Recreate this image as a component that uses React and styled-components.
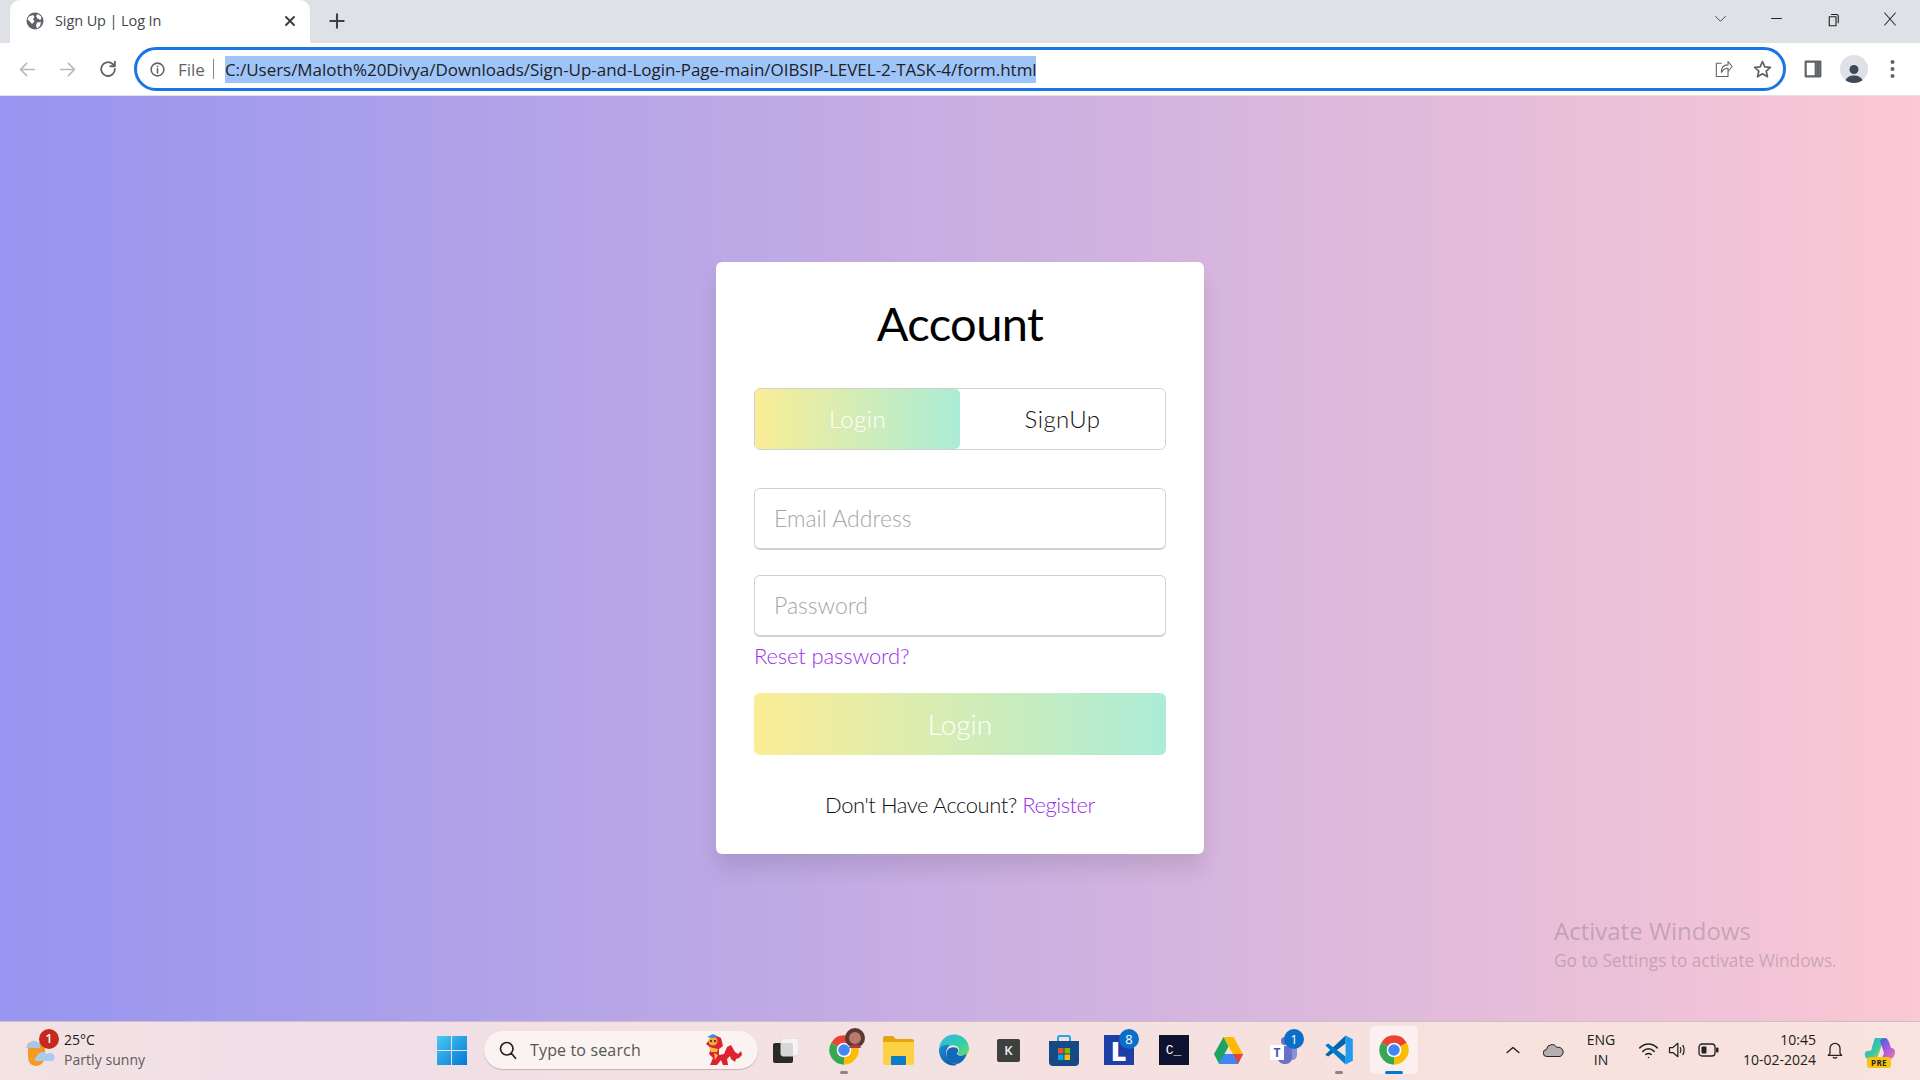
import React from "react";
import styled, { createGlobalStyle } from "styled-components";

const Global = createGlobalStyle`
  html, body { margin: 0; padding: 0; width: 100%; height: 100%; overflow: hidden; }
  body { font-family: "Open Sans", "Noto Sans", sans-serif; }
  * { box-sizing: border-box; }
`;

const Screen = styled.div`display:flex;flex-direction:column;width:1920px;height:1080px;position:relative;overflow:hidden;`;

/* ---------- browser chrome ---------- */
const TabStrip = styled.div`display:flex;align-items:flex-end;height:43px;background:#dee1e6;flex:none;`;
const Tab = styled.div`
  display:flex;align-items:center;width:300px;height:43px;margin-left:10px;padding:0 12px 2px 16px;
  background:#fff;border-radius:10px 10px 0 0;color:#45474b;font-size:14.5px;
`;
const TabTitle = styled.span`margin-left:11px;flex:1;letter-spacing:-.1px;`;
const NewTab = styled.div`display:flex;align-items:center;justify-content:center;width:32px;height:43px;margin-left:11px;padding-bottom:2px;`;
const WindowControls = styled.div`display:flex;margin-left:auto;height:43px;align-self:flex-start;padding-right:2px;`;
const WinButton = styled.div`display:flex;align-items:center;justify-content:center;width:56.5px;height:37px;`;

const Toolbar = styled.div`display:flex;align-items:center;height:53px;padding-left:7px;background:#fff;flex:none;border-bottom:1px solid #e3e0e8;`;
const NavButton = styled.div`display:flex;align-items:center;justify-content:center;width:40.3px;height:40px;`;
const Omnibox = styled.div`
  display:flex;align-items:center;width:1652px;height:44px;margin-left:6px;padding-left:12px;
  border:3px solid #1a73e8;border-radius:22px;font-size:17px;color:#5f6368;
`;
const FileLabel = styled.span`margin-left:12px;width:35px;`;
const Divider = styled.span`width:1px;height:20px;background:#80868b;`;
const Url = styled.span`
  margin-left:11px;height:27px;line-height:27px;width:811px;white-space:nowrap;overflow:hidden;
  background:#9fc5f8;color:#202124;letter-spacing:-.03px;
`;
const OmniActions = styled.div`display:flex;align-items:center;margin-left:auto;padding-right:0;`;
const OmniAction = styled.div`display:flex;align-items:center;justify-content:center;width:40px;height:36px;`;
const ToolRight = styled.div`display:flex;align-items:center;margin-left:6px;`;
const ToolAction = styled.div`display:flex;align-items:center;justify-content:center;width:${p => p.$w}px;height:40px;`;
const Avatar = styled.div`display:flex;align-items:flex-end;justify-content:center;width:28px;height:28px;border-radius:50%;background:#dee1e6;overflow:hidden;`;

/* ---------- page ---------- */
const Main = styled.main`
  flex:1;display:flex;align-items:center;justify-content:center;padding-bottom:2px;
  background:linear-gradient(to right,#9795f0,#fbc8d4);
  font-family:"Lato","Open Sans",sans-serif;font-weight:300;
`;
const Card = styled.section`
  width:488px;padding:38px 38px 37px;background:#fff;border-radius:6px;
  box-shadow:0 15px 20px rgba(0,0,0,.1);display:flex;flex-direction:column;
`;
const Title = styled.h1`
  margin:0 0 38px;height:50px;line-height:47px;text-align:center;font-size:47px;font-weight:400;color:#000;letter-spacing:-.6px;
`;
const Tabs = styled.div`display:flex;height:62px;margin-bottom:38px;border:1px solid #d0d0d0;border-radius:6px;overflow:hidden;`;
const TabButton = styled.button`
  flex:1;border:0;font:inherit;font-size:24px;letter-spacing:.4px;padding:0;border-radius:5px;
  color:${p => (p.$active ? "#fff" : "#111")};
  background:${p => (p.$active ? "linear-gradient(to right,#fbed96,#abecd6)" : "#fff")};
`;
const Field = styled.input`
  display:block;width:100%;height:62px;margin-bottom:${p => p.$mb}px;padding:0 19px;
  border:1px solid #d0d0d0;border-bottom-width:2px;border-radius:6px;outline:none;background:#fff;
  font:inherit;font-size:23px;letter-spacing:0;
  &::placeholder{color:#a5a5a5;opacity:1;}
`;
const Reset = styled.a`display:block;height:24px;line-height:24px;margin:7px 0 25px;font-size:22px;color:#9b30e8;letter-spacing:-.15px;`;
const Submit = styled.button`
  height:62px;border:0;border-radius:6px;padding:0;font:inherit;font-size:28px;color:#fff;
  background:linear-gradient(to right,#fbed96,#abecd6);
`;
const Foot = styled.p`margin:38px 0 0;height:24px;line-height:24px;text-align:center;font-size:22px;color:#111;letter-spacing:-.47px;`;
const FootLink = styled.a`color:#9b30e8;`;

const Watermark = styled.div`position:absolute;left:1554px;top:914px;color:rgba(90,90,90,.3);`;
const WatermarkHead = styled.div`font-size:24px;line-height:34px;`;
const WatermarkSub = styled.div`font-size:17.25px;line-height:24px;margin-top:1px;`;

/* ---------- taskbar ---------- */
const Taskbar = styled.footer`
  display:grid;grid-template-columns:424px 995px 1fr;height:59px;flex:none;color:#1c1c1c;padding-bottom:2px;
  border-top:1px solid #cdbfc6;
  background:linear-gradient(to right,#f3e3e2,#f0dee8 15%,#f3e1e3 40%,#f6e1de 70%,#f9e3de);
`;
const Weather = styled.div`display:flex;align-items:center;padding-left:25px;`;
const WeatherIcon = styled.div`position:relative;width:30px;height:30px;margin-right:9px;`;
const RedBadge = styled.span`
  position:absolute;left:14px;top:-6px;width:20px;height:20px;border-radius:50%;background:#c42b1c;color:#fff;
  font-size:12px;line-height:20px;text-align:center;font-weight:600;
`;
const WeatherText = styled.div`font-size:14px;line-height:20px;`;
const WeatherSub = styled.div`color:#5d5a5c;letter-spacing:.05px;`;
const Center = styled.div`display:flex;align-items:center;`;
const TaskItem = styled.div`
  position:relative;display:flex;align-items:center;justify-content:center;flex:none;width:${p => p.$w || 55}px;height:48px;
  margin:0 ${p => p.$mr || 0}px 0 ${p => p.$ml || 0}px;border-radius:5px;
  background:${p => (p.$active ? "rgba(255,255,255,.5)" : "transparent")};
`;
const Search = styled.div`
  position:relative;display:flex;align-items:center;flex:none;width:274px;height:38px;margin-left:5px;padding-left:14px;
  border-radius:19px;background:#faf3f1;box-shadow:0 1px 1px rgba(120,90,90,.35);font-size:16px;color:#555;
`;
const SearchText = styled.span`margin-left:12px;letter-spacing:.15px;`;
const Dragon = styled.div`position:absolute;right:13px;top:3px;`;
const Running = styled.span`
  position:absolute;left:50%;bottom:0;transform:translateX(-50%);height:3px;border-radius:2px;
  width:${p => (p.$active ? 18 : 8)}px;background:${p => (p.$active ? "#0078d4" : "#8a8385")};
`;
const Pip = styled.span`
  position:absolute;right:${p => p.$r}px;top:${p => p.$t}px;width:20px;height:20px;border-radius:50%;background:#0b6fc9;color:#fff;
  font-size:13px;line-height:20px;text-align:center;
`;
const Tile = styled.div`
  display:flex;align-items:center;justify-content:center;width:${p => p.$s}px;height:${p => p.$s}px;
  background:${p => p.$bg};color:${p => p.$fg};border-radius:${p => p.$r || 0}px;
  font-size:${p => p.$fs}px;font-weight:${p => p.$fw || 400};font-family:${p => p.$ff || "inherit"};
`;
const Tray = styled.div`display:flex;align-items:center;justify-content:flex-end;padding-right:18px;`;
const TrayItem = styled.div`display:flex;align-items:center;justify-content:center;width:${p => p.$w}px;height:48px;`;
const Stack = styled.div`font-size:14px;line-height:20px;text-align:${p => p.$align};width:100%;color:#222;`;
const Pre = styled.span`
  position:absolute;left:3px;bottom:-5px;width:24px;height:11px;border-radius:3px;background:#f6c50e;color:#222;
  font-size:8px;line-height:11px;font-weight:700;text-align:center;letter-spacing:.4px;
`;
const Copilot = styled.div`position:relative;width:28px;height:26px;`;

/* ---------- icons ---------- */
const Globe = () => (
  <svg width="18" height="18" viewBox="0 0 18 18"><circle cx="9" cy="9" r="8.500" fill="#5f6368"/>
    <path d="M3 4.500 7 3l1.500 2L7 7l1.500 2.500L6 12 3.500 9 1.500 7.500zM12 2l3.500 3-1 3-3-1.500L10 4zM11 10.500l4-.5-1 4-3 2.500-1-3z" fill="#fff"/></svg>
);
const Line = ({ d, s = 20, w = 2, c = "#5f6368", v = 24 }) => (
  <svg width={s} height={s} viewBox={`0 0 ${v} ${v}`} fill="none" stroke={c} strokeWidth={w} strokeLinecap="round" strokeLinejoin="round"><path d={d}/></svg>
);
const ChromeLogo = () => (
  <svg width="32" height="32" viewBox="0 0 24 24">
    <path d="M12 12 2.470 6.500A11 11 0 0 1 21.530 6.500z" fill="#ea4335"/>
    <path d="M12 12l9.530-5.500A11 11 0 0 1 12 23z" fill="#fbbc04"/>
    <path d="M12 12v11A11 11 0 0 1 2.470 6.500z" fill="#34a853"/>
    <circle cx="12" cy="12" r="5.500" fill="#fff"/><circle cx="12" cy="12" r="4.300" fill="#4285f4"/>
  </svg>
);
const FilesIcon = () => (
  <svg width="31" height="30" viewBox="0 0 31 30">
    <path d="M0 3a2 2 0 0 1 2-2h8l3 3h16a2 2 0 0 1 2 2v4H0z" fill="#e5a50f"/>
    <path d="M0 7h31v21a2 2 0 0 1-2 2H2a2 2 0 0 1-2-2z" fill="#fcd145"/>
    <rect x="8" y="21" width="15" height="9" rx="1" fill="#0a7cc4"/>
  </svg>
);
const EdgeIcon = () => (
  <svg width="32" height="32" viewBox="0 0 32 32">
    <defs>
      <linearGradient id="e1" x1="0" y1="0" x2="1" y2="1"><stop offset="0" stopColor="#2fb6ea"/><stop offset=".6" stopColor="#31cfa6"/><stop offset="1" stopColor="#6fdc5e"/></linearGradient>
      <linearGradient id="e2" x1="0" y1="0" x2="1" y2="1"><stop offset="0" stopColor="#1a8fd6"/><stop offset="1" stopColor="#0c4f9e"/></linearGradient>
    </defs>
    <path d="M1 15C2 6 8 .5 16 .5 25 .5 31 7 31 15c0 4-3 6.500-7 6.500-3 0-5-1-5-2.500 2-1 2.500-3 1.500-5-1.500-3-6-3.500-9.500-2C7 13.500 3 13 1 15z" fill="url(#e1)"/>
    <path d="M1 15c2-3 7-5.500 11-3.500-3 2-4.500 6-3.500 10S14 30 19 30.500C18 31 17 31.500 16 31.500 7 31.500.5 24 1 15z" fill="url(#e2)"/>
    <path d="M12 14c3-1.500 7-1 8 1.500.5 1.500 0 3-1.500 3.500.5 2 3 3 5.500 2.500 2-.2 4-1 5-2.500-1.500 6-6 11-11 11-5-.5-9-4-9.500-9-.3-3 1-6 3.500-7z" fill="#1268b8"/>
  </svg>
);
const StoreIcon = () => (
  <svg width="30" height="31" viewBox="0 0 30 31">
    <path d="M9 6V3a2 2 0 0 1 2-2h8a2 2 0 0 1 2 2v3" fill="none" stroke="#27a4e6" strokeWidth="2"/>
    <path d="M0 6h30v21a4 4 0 0 1-4 4H4a4 4 0 0 1-4-4z" fill="#164a86"/>
    <rect x="9" y="13" width="5.500" height="5.500" fill="#f25022"/><rect x="15.500" y="13" width="5.500" height="5.500" fill="#7fba00"/>
    <rect x="9" y="19.500" width="5.500" height="5.500" fill="#00a4ef"/><rect x="15.500" y="19.500" width="5.500" height="5.500" fill="#ffb900"/>
  </svg>
);
const DriveIcon = () => (
  <svg width="29" height="27" viewBox="0 0 29 27">
    <path d="M9.500 0h10l9.500 17h-10z" fill="#ffba00"/>
    <path d="M9.500 17H29l-5 10H5z" fill="#4285f4"/>
    <path d="M9.500 0 0 17l5 10 9.500-17.500z" fill="#1ea362"/>
    <path d="M29 17l-5 10-5-10z" fill="#e0483b"/>
  </svg>
);
const TeamsIcon = () => (
  <svg width="28" height="28" viewBox="0 0 28 28">
    <circle cx="15" cy="5" r="4" fill="#6a6fc8"/><circle cx="23" cy="7" r="3" fill="#8a90dc"/>
    <path d="M17 10h10v9a5 5 0 0 1-6 5z" fill="#8a90dc"/>
    <path d="M7 10h15v12a6 6 0 0 1-6 6 8 8 0 0 1-9-7z" fill="#6a6fc8"/>
    <rect x="0" y="9" width="14" height="15" fill="#fff"/>
    <text x="7" y="21" fontSize="12" fontWeight="700" fill="#4b53bc" textAnchor="middle" fontFamily="Open Sans">T</text>
  </svg>
);
const VsCode = () => (
  <svg width="30" height="30" viewBox="0 0 100 100">
    <path d="M4 66 14 72 72 28V2z" fill="#0065a9"/>
    <path d="M4 34 14 28 72 72V98z" fill="#007acc"/>
    <path d="M72 2 96 14V86L72 98z" fill="#1f9cf0"/>
  </svg>
);
const Copi = () => (
  <svg width="32" height="28" viewBox="0 0 32 28">
    <defs>
      <linearGradient id="c1" x1="0" y1="0" x2="1" y2="1"><stop offset="0" stopColor="#22a7ee"/><stop offset=".55" stopColor="#3cc8a0"/><stop offset="1" stopColor="#d9d84a"/></linearGradient>
      <linearGradient id="c2" x1="0" y1="0" x2="1" y2="1"><stop offset="0" stopColor="#2468e0"/><stop offset=".5" stopColor="#a65ae0"/><stop offset="1" stopColor="#ee7ab0"/></linearGradient>
    </defs>
    <path d="M11 1h9l-5 15c-1 4-3 7-7 7-5 0-8-3-7-7 1-2 2-2 3-2 3 0 4-1 4-4z" fill="url(#c1)"/>
    <path d="M16 4c1-2 3-3 5-3s3 2 4 4l2 6c2 0 4 1 4 4 0 5-4 8-8 8h-9c4-1 5-4 6-7z" fill="url(#c2)"/>
  </svg>
);
const Win11 = () => (
  <svg width="30" height="30" viewBox="0 0 30 30">
    <defs><linearGradient id="w" x1="0" y1="0" x2="1" y2="1"><stop offset="0" stopColor="#4cc8f5"/><stop offset="1" stopColor="#0078d4"/></linearGradient></defs>
    <path d="M0 1h14v14H0zM15 1h15v14H15zM0 16h14v14H0zM15 16h15v14H15z" fill="url(#w)"/>
  </svg>
);
const DragonIcon = () => (
  <svg width="44" height="32" viewBox="0 0 44 32">
    <path d="M10 4l4-3 6 3 2 8-4 3v6l5-1 3-7 4-2 4 7 3 2 3-3 1 4-3 3-3 1-1 3-4-3-1-3-3 3 1 6h-5l-2-5-4 5H9l3-7-4-4 2-6-5-4z" fill="#dd2230"/>
    <circle cx="12" cy="7" r="4.500" fill="#f2a83a"/><path d="M6 3l6-3 5 3-6 1z" fill="#3b8fd6"/>
    <path d="M8 13l9 2-1 3H10zM13 19l4 2-3 5z" fill="#f8c23c"/>
    <circle cx="10" cy="7" r="1" fill="#222"/><circle cx="14" cy="7" r="1" fill="#222"/>
  </svg>
);
const WeatherArt = () => (
  <svg width="30" height="32" viewBox="0 0 30 32">
    <path d="M3 8h17v14a9 9 0 0 1-9 9c-5 0-8-4-8-9z" fill="#f39c1f"/>
    <path d="M1 13a5 5 0 0 1 3-4 6 6 0 0 1 10-1 5 5 0 0 1 1 5z" fill="#a9c6ea"/>
    <path d="M10 26a4 4 0 0 1 2-5 6 6 0 0 1 10-2 4 4 0 0 1 6 7z" fill="#a9cbef"/>
  </svg>
);
const Battery = () => (
  <svg width="21" height="14" viewBox="0 0 21 14">
    <rect x="1" y="1" width="16" height="12" rx="3" fill="none" stroke="#222" strokeWidth="1.300"/>
    <rect x="3.500" y="3.500" width="5" height="7" rx="1" fill="#222"/><rect x="18" y="4.500" width="2.500" height="5" rx="1" fill="#222"/>
  </svg>
);
const Cloud = () => (
  <svg width="21" height="14" viewBox="0 0 21 14">
    <path d="M4 13.500a3.500 3.500 0 0 1-.5-7A5.500 5.500 0 0 1 13.800 4.500 4.500 4.500 0 0 1 17 13.500z" fill="#b4aeae" stroke="#222" strokeWidth="1"/>
  </svg>
);

const App = () => (
  <Screen>
    <Global />
    <TabStrip>
      <Tab>
        <Globe />
        <TabTitle>Sign Up | Log In</TabTitle>
        <Line d="M6 6l12 12M18 6 6 18" s={16} w={3} c="#3c4043" />
      </Tab>
      <NewTab><Line d="M12 4v16M4 12h16" s={20} w={2.500} c="#3c4043" /></NewTab>
      <WindowControls>
        <WinButton><Line d="M5 9l7 7 7-7" s={17} w={1.300} c="#3c4043" /></WinButton>
        <WinButton><Line d="M5 12h14" s={17} w={1.500} c="#222" /></WinButton>
        <WinButton><Line d="M7 9h9v12H7zM10 6h7a2 2 0 0 1 2 2v9" s={18} w={1.500} c="#222" /></WinButton>
        <WinButton><Line d="M5 4l14 16M19 4 5 20" s={18} w={1.400} c="#222" /></WinButton>
      </WindowControls>
    </TabStrip>
    <Toolbar>
      <NavButton><Line d="M20 12H5M11 5l-7 7 7 7" s={21} w={1.800} c="#b6b9bd" /></NavButton>
      <NavButton><Line d="M4 12h15M13 5l7 7-7 7" s={21} w={1.800} c="#b6b9bd" /></NavButton>
      <NavButton><Line d="M19.500 12A7.500 7.500 0 1 1 17 6.500L19.500 9M19.500 4v5h-5" s={22} w={2} c="#5f6368" /></NavButton>
      <Omnibox>
        <Line d="M12 3a9 9 0 1 0 0 18 9 9 0 0 0 0-18zM12 11v6M12 7.500v.5" s={17} w={2.200} c="#5f6368" />
        <FileLabel>File</FileLabel>
        <Divider />
        <Url>C:/Users/Maloth%20Divya/Downloads/Sign-Up-and-Login-Page-main/OIBSIP-LEVEL-2-TASK-4/form.html</Url>
        <OmniActions>
          <OmniAction><Line d="M10 5H4v16h14v-6M10 16c0-6 3-9 8-9V3l5 6-5 6v-4c-4 0-6 2-8 5z" s={20} w={1.300} c="#5f6368" /></OmniAction>
          <OmniAction><Line d="M12 3l2.700 6 6.300.6-4.800 4.300 1.500 6.400-5.700-3.500-5.700 3.500 1.500-6.400L3 9.600 9.300 9z" s={21} w={2} c="#5f6368" /></OmniAction>
        </OmniActions>
      </Omnibox>
      <ToolRight>
        <ToolAction $w={42}><Line d="M4 4h16v16H4zM15 4v16M17.500 4v16" s={22} w={2.400} c="#5f6368" /></ToolAction>
        <ToolAction $w={40}>
          <Avatar>
            <svg width="20" height="20" viewBox="0 0 20 20"><circle cx="10" cy="6.500" r="4.500" fill="#3c4a5a"/><path d="M1 20c0-5 4-7.500 9-7.500s9 2.500 9 7.500z" fill="#3c4a5a"/></svg>
          </Avatar>
        </ToolAction>
        <ToolAction $w={38}>
          <svg width="5" height="20" viewBox="0 0 5 20" fill="#5f6368"><circle cx="2.500" cy="3" r="2"/><circle cx="2.500" cy="10" r="2"/><circle cx="2.500" cy="17" r="2"/></svg>
        </ToolAction>
      </ToolRight>
    </Toolbar>

    <Main>
      <Card>
        <Title>Account</Title>
        <Tabs>
          <TabButton $active>Login</TabButton>
          <TabButton>SignUp</TabButton>
        </Tabs>
        <Field $mb={25} placeholder="Email Address" />
        <Field $mb={0} placeholder="Password" />
        <Reset>Reset password?</Reset>
        <Submit>Login</Submit>
        <Foot>Don't Have Account? <FootLink>Register</FootLink></Foot>
      </Card>
    </Main>

    <Watermark>
      <WatermarkHead>Activate Windows</WatermarkHead>
      <WatermarkSub>Go to Settings to activate Windows.</WatermarkSub>
    </Watermark>

    <Taskbar>
      <Weather>
        <WeatherIcon><WeatherArt /><RedBadge>1</RedBadge></WeatherIcon>
        <WeatherText>
          <div>25°C</div>
          <WeatherSub>Partly sunny</WeatherSub>
        </WeatherText>
      </Weather>
      <Center>
        <TaskItem><Win11 /></TaskItem>
        <Search>
          <Line d="M10.500 3a7.500 7.500 0 1 0 0 15 7.500 7.500 0 0 0 0-15zM16 16l5 6" s={20} w={2} c="#222" />
          <SearchText>Type to search</SearchText>
          <Dragon><DragonIcon /></Dragon>
        </Search>
        <TaskItem $mr={3}>
          <svg width="26" height="25" viewBox="0 0 26 25"><rect x="0" y="5" width="20" height="20" rx="2" fill="#2a2a2a"/><rect x="8" y="0" width="18" height="18" rx="2" fill="#f7f5f5" fillOpacity=".85" stroke="#d8d4d4"/></svg>
        </TaskItem>
        <TaskItem>
          <ChromeLogo />
          <svg width="20" height="20" viewBox="0 0 20 20" style={{ position: "absolute", right: 6, top: 2 }}>
            <circle cx="10" cy="10" r="10" fill="#5b3a34"/><circle cx="10" cy="10" r="6" fill="#b77a6c"/><path d="M4 20c1-5 11-5 12 0z" fill="#a33b4c"/>
          </svg>
          <Running />
        </TaskItem>
        <TaskItem><FilesIcon /></TaskItem>
        <TaskItem><EdgeIcon /></TaskItem>
        <TaskItem><Tile $s={23} $bg="#3f3f3f" $fg="#eee" $fs={13} $r={2} $fw={600}>K</Tile></TaskItem>
        <TaskItem><StoreIcon /></TaskItem>
        <TaskItem>
          <Tile $s={30} $bg="#1e3ea8" $fg="#fff" $fs={27} $fw={800}>L</Tile>
          <Pip $r={7} $t={3}>8</Pip>
        </TaskItem>
        <TaskItem><Tile $s={30} $bg="#0e1230" $fg="#fff" $fs={13} $ff="'Liberation Mono',monospace">C_</Tile></TaskItem>
        <TaskItem><DriveIcon /></TaskItem>
        <TaskItem>
          <TeamsIcon />
          <Pip $r={7} $t={3}>1</Pip>
        </TaskItem>
        <TaskItem><VsCode /><Running /></TaskItem>
        <TaskItem $active $w={48} $ml={4} $mr={3}><ChromeLogo /><Running $active /></TaskItem>
      </Center>
      <Tray>
        <TrayItem $w={40}><Line d="M5 15l7-6 7 6" s={20} w={1.800} c="#222" /></TrayItem>
        <TrayItem $w={40}><Cloud /></TrayItem>
        <TrayItem $w={56}><Stack $align="center">ENG<br />IN</Stack></TrayItem>
        <TrayItem $w={38}><Line d="M2 9c6-6 14-6 20 0M5.500 13c4-4 9-4 13 0M9 16.500c2-1.500 4-1.500 6 0M12 20v.1" s={21} w={1.700} c="#222" /></TrayItem>
        <TrayItem $w={20}><Line d="M3 9v6h4l6 5V4L7 9zM16 9c1 2 1 4 0 6M19 6.500c2 3 2 8 0 11" s={20} w={1.500} c="#222" /></TrayItem>
        <TrayItem $w={42}><Battery /></TrayItem>
        <TrayItem $w={87}><Stack $align="right">10:45<br />10-02-2024</Stack></TrayItem>
        <TrayItem $w={38}><Line d="M6 16V10a6 6 0 0 1 12 0v6l2 2.500H4zM10 21c1 1 3 1 4 0" s={20} w={1.500} c="#222" /></TrayItem>
        <TrayItem $w={48}><Copilot><Copi /><Pre>PRE</Pre></Copilot></TrayItem>
      </Tray>
    </Taskbar>
  </Screen>
);

export default App;
